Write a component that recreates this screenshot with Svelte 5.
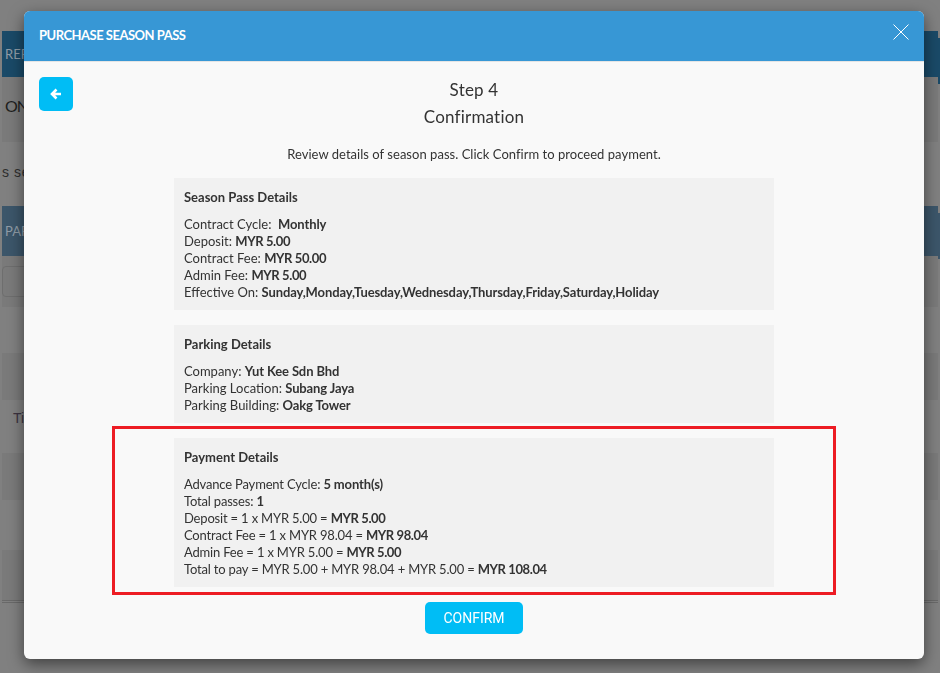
<script>
  const sections = [
    { title: 'Season Pass Details', lines: [
      ['Contract Cycle:\u00a0 ', 'Monthly'], ['Deposit: ', 'MYR 5.00', true], ['Contract Fee: ', 'MYR 50.00', true], ['Admin Fee: ', 'MYR 5.00', true],
      ['Effective On: ', 'Sunday,Monday,Tuesday,Wednesday,Thursday,Friday,Saturday,Holiday'] ] },
    { title: 'Parking Details', lines: [
      ['Company: ', 'Yut Kee Sdn Bhd'], ['Parking Location: ', 'Subang Jaya'], ['Parking Building: ', 'Oakg Tower'] ] },
    { title: 'Payment Details', tight: true, lines: [
      ['Advance Payment Cycle: ', '5 month(s)'], ['Total passes: ', '1'], ['Deposit = 1 x MYR 5.00 = ', 'MYR 5.00', true],
      ['Contract Fee = 1 x MYR 98.04 = ', 'MYR 98.04', true], ['Admin Fee = 1 x MYR 5.00 = ', 'MYR 5.00', true],
      ['Total to pay = MYR 5.00 + MYR 98.04 + MYR 5.00 = ', 'MYR 108.04', true] ] }
  ];
</script>

<div class="page">
  <div class="bg-top"></div>
  <div class="bg-bar one">REP</div>
  <div class="bg-row dark h65"><span class="bg-head">ON</span></div>
  <div class="bg-row h64"><span class="bg-note">s se</span></div>
  <div class="bg-bar two">PAR</div>
  <div class="bg-row dark h51"><span class="bg-input"></span></div>
  <div class="bg-row h46"></div>
  <div class="bg-row dark h47"></div>
  <div class="bg-row h53"><span class="bg-cell">Ti</span></div>
  <div class="bg-row dark h47"></div>
  <div class="bg-row h50"></div>
  <div class="bg-row dark h50"></div>
  <div class="bg-rule"></div>
</div>

<div class="overlay">
  <div class="modal">
    <header>
      <h1>PURCHASE SEASON PASS</h1>
      <svg class="close" viewBox="0 0 16 16" width="16" height="16"><path d="M.5.5l15 15M15.500.500l-15 15" stroke="#fff" stroke-width="1" fill="none"/></svg>
    </header>
    <div class="body">
      <button class="back" aria-label="Back">
        <svg viewBox="0 0 12 12" width="12" height="12"><path d="M6.500 1.500L2 6l4.500 4.500M2.500 6H11" stroke="#fff" stroke-width="2.600" fill="none"/></svg>
      </button>
      <h2>Step 4</h2>
      <h3>Confirmation</h3>
      <p class="intro">Review details of season pass. Click Confirm to proceed payment.</p>
      {#each sections as s}
        <section class:tight={s.tight}>
          <h4>{s.title}</h4>
          {#each s.lines as l}
            <div class="line">{l[0]}<b class:amt={l[2]}>{l[1]}</b></div>
          {/each}
        </section>
      {/each}
      <div class="actions"><button class="confirm">CONFIRM</button></div>
    </div>
  </div>
  <div class="mark"></div>
</div>

<style>
  :global(body) { margin: 0; background: #808080; overflow: hidden; }
  .page { height: 673px; background: #808080; font-family: "Liberation Sans", sans-serif; color: #333; overflow: hidden; }
  .bg-top { height: 31px; }
  .bg-bar { position: relative; margin: 0 2px; background: #1a4a68; color: #8f9ca6; height: 46px; line-height: 46px; font-family: Lato, sans-serif; font-size: 13px; font-weight: 400; padding-left: 3px; }
  .bg-bar::after { content: ""; position: absolute; right: -2px; top: 7px; width: 2px; height: 46px; background: inherit; }
  .bg-bar.two { background: #3c566a; height: 50px; line-height: 50px; }
  .bg-row { margin: 0 2px; background: #808080; position: relative; display: flex; align-items: flex-start; }
  .bg-row.dark { background: #7a7a7a; }
  .h65 { height: 65px; } .h64 { height: 64px; } .h51 { height: 51px; } .h46 { height: 46px; }
  .h47 { height: 47px; } .h53 { height: 53px; } .h50 { height: 50px; }
  .bg-head { font-family: Lato, sans-serif; font-size: 16px; letter-spacing: -1px; line-height: 24px; margin: 17px 0 0 3px; color: #1f1f1f; }
  .bg-note { font-size: 14px; letter-spacing: .6px; line-height: 16px; margin: 22px 0 0 0; color: #2e2e2e; white-space: nowrap; }
  .bg-input { width: 60px; height: 31px; margin-top: 10px; border: 1px solid #6e6e6e; border-radius: 4px; box-sizing: border-box; }
  .bg-cell { font-size: 14px; line-height: 18px; margin: 9px 0 0 11px; color: #3c3340; }
  .bg-rule { margin: 0 2px; height: 3px; border-top: 1px solid #696969; border-bottom: 1px solid #696969; box-sizing: border-box; }
  .overlay { position: fixed; inset: 0; }
  .modal { position: absolute; left: 24px; top: 11px; width: 900px; height: 648px; background: #f9f9f9; border-radius: 6px; overflow: hidden; box-shadow: 0 5px 15px rgba(0,0,0,.5); font-family: Lato, sans-serif; font-size: 13px; color: #333; }
  header { height: 50px; background: #3797d5; border-bottom: 1px solid #e5e5e5; display: flex; align-items: center; padding: 0 15px; position: relative; }
  h1 { margin: 0 0 2px; color: #fff; font-size: 13px; font-weight: 700; letter-spacing: -.5px; }
  .close { position: absolute; right: 15px; top: 13px; }
  .body { position: relative; padding-top: 14px; }
  .back { position: absolute; left: 15px; top: 15px; width: 34px; height: 34px; border: 0; border-radius: 5px; background: #00bdf5; display: flex; align-items: center; justify-content: center; padding: 0; }
  h2, h3 { margin: 0; text-align: center; font-weight: 400; font-size: 17px; letter-spacing: .2px; line-height: 27px; color: #333; }
  .intro { margin: 16px 0 15px; text-align: center; line-height: 17px; letter-spacing: .03px; }
  section { width: 580px; margin: 0 auto 15px; padding: 11px 10px 9px; background: #f1f1f1; }
  section.tight .line { letter-spacing: -.18px; }
  h4 { margin: 0 0 10px; font-size: 13px; font-weight: 700; line-height: 17px; }
  .line { line-height: 17px; }
  .line b { letter-spacing: -.12px; }
  .line b.amt { letter-spacing: -.4px; }
  .actions { text-align: center; }
  .confirm { width: 98px; height: 32px; border: 0; border-radius: 5px; background: #00bdf5; color: #fff; font-family: Roboto, sans-serif; font-size: 14px; padding: 0; }
  .mark { position: absolute; left: 112px; top: 426px; width: 718px; height: 163px; border: 3px solid #ed1c24; }
</style>
